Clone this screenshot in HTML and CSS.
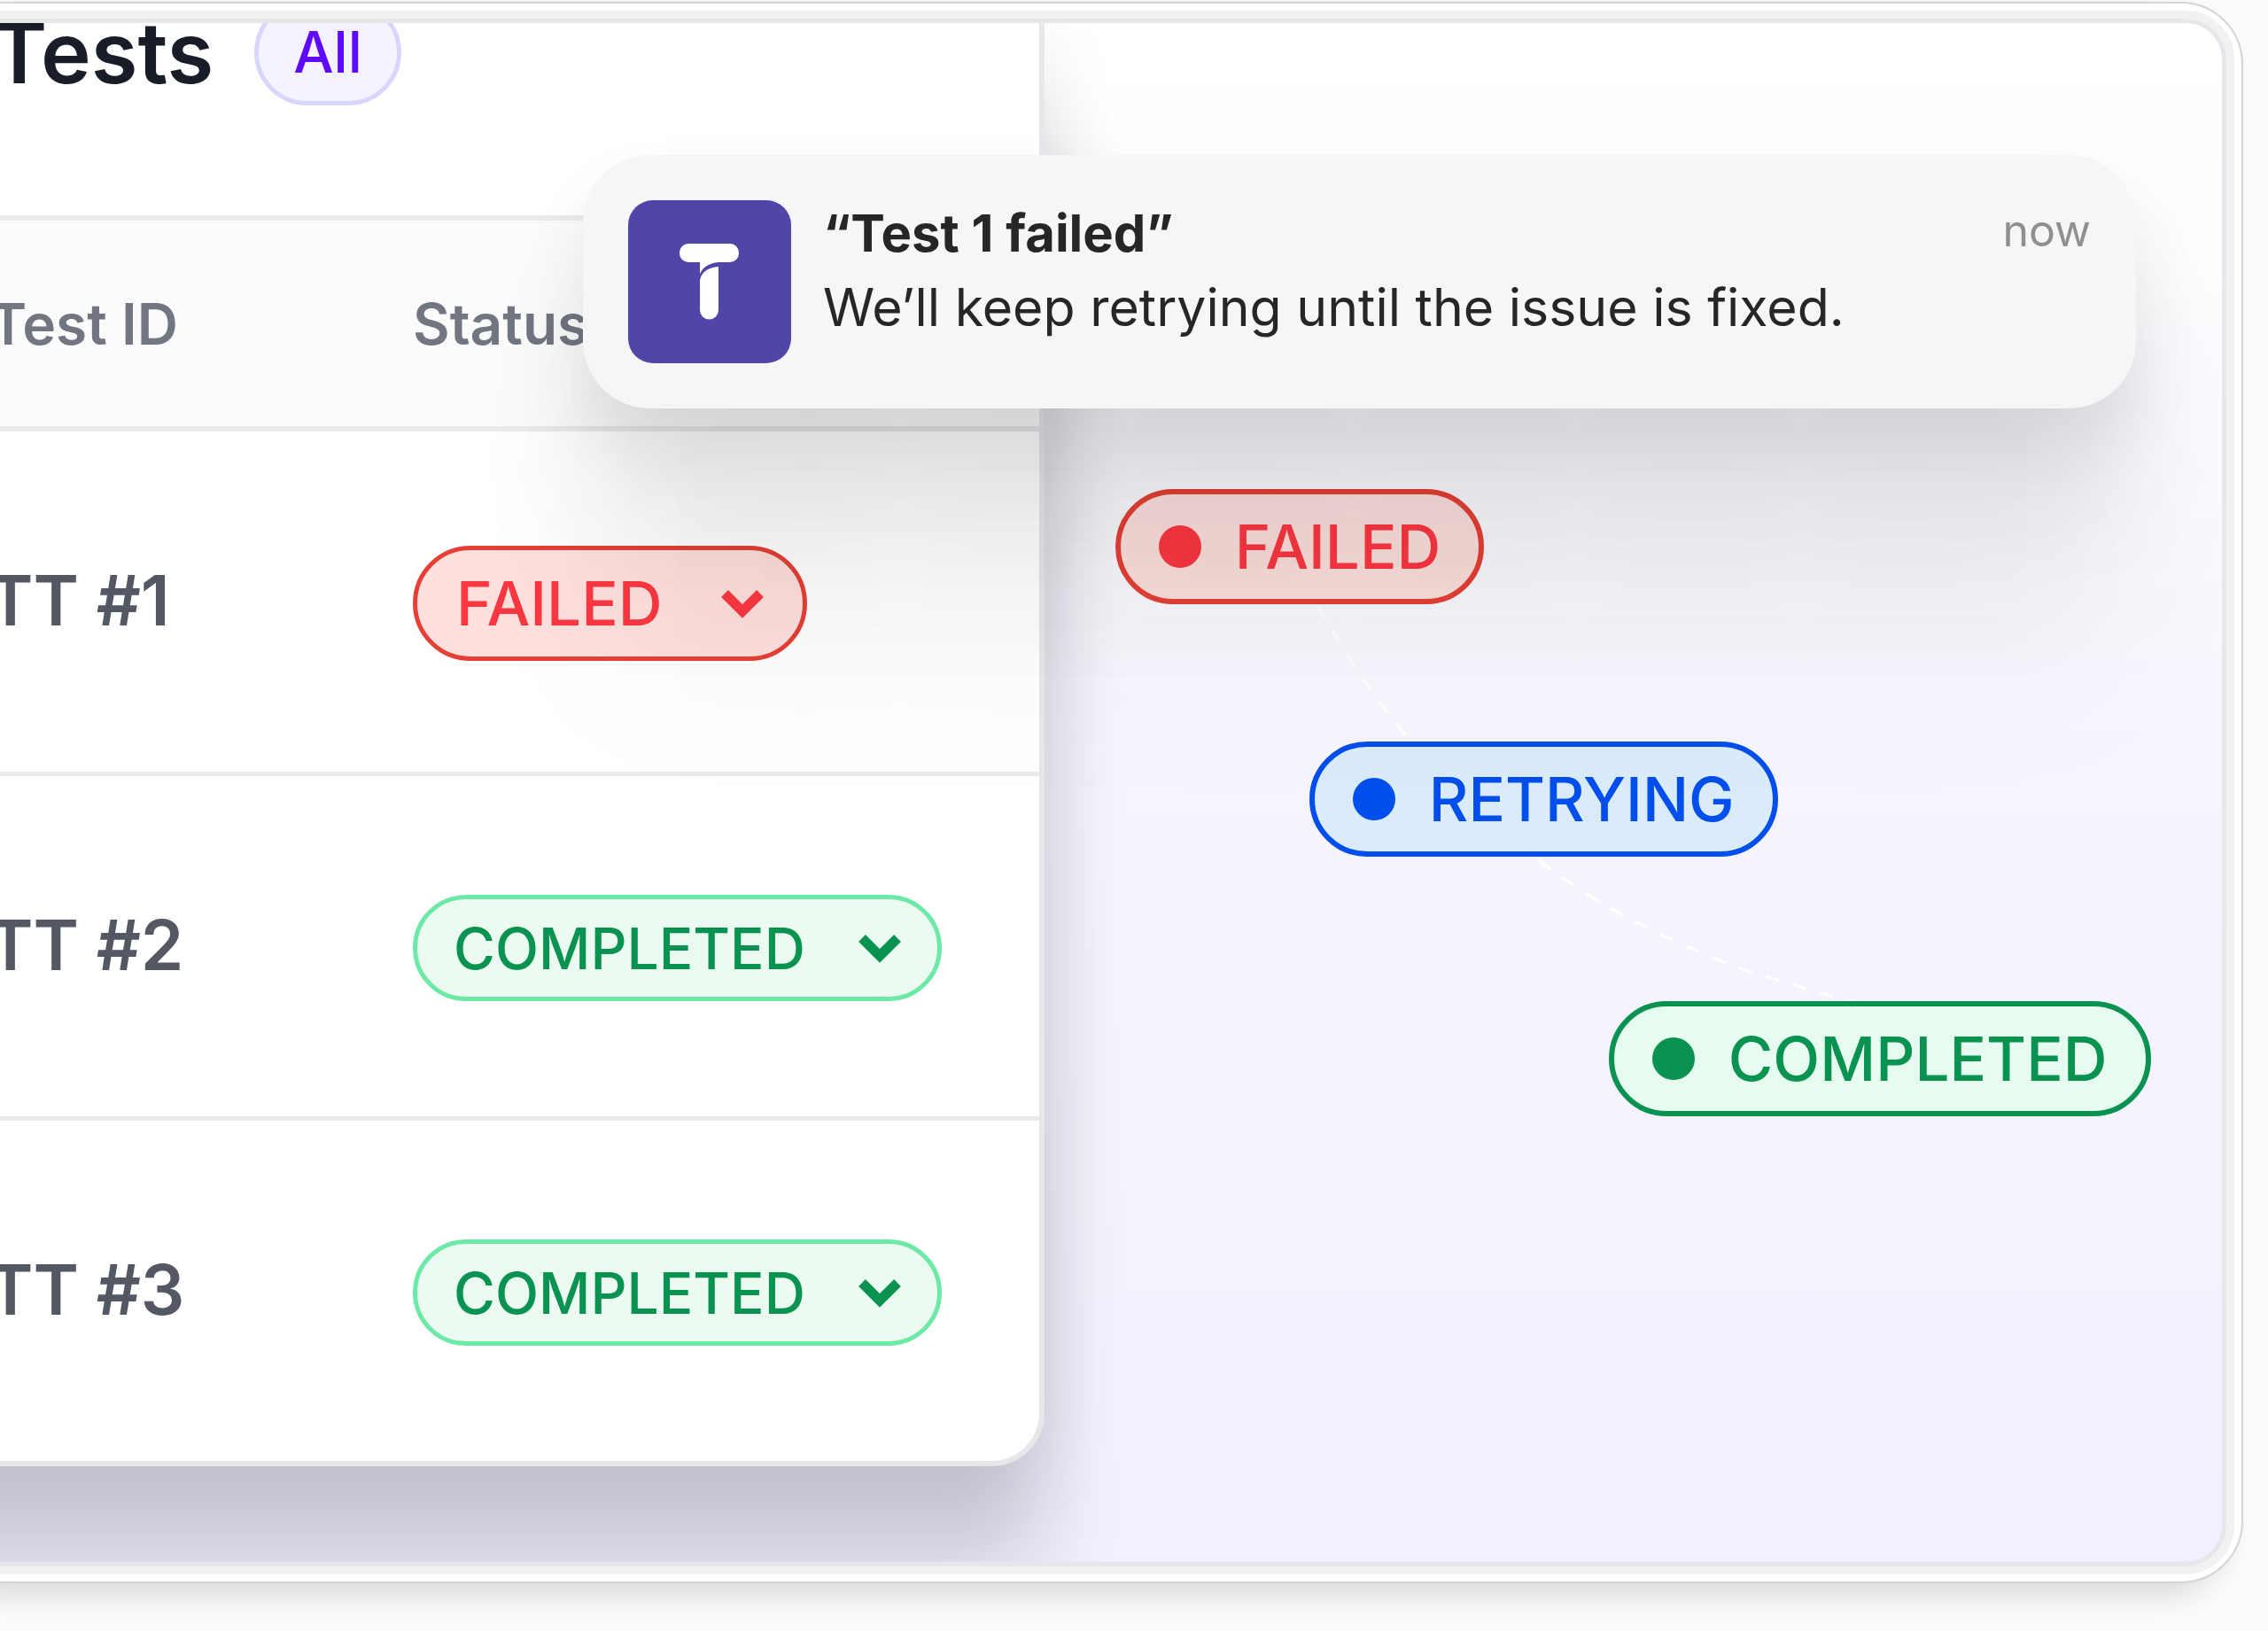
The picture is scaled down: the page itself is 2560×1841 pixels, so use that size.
FILE: index.html
```html
<!DOCTYPE html>
<html lang="en">
<head>
<meta charset="utf-8">
<title>Tests</title>
<link rel="stylesheet" href="styles.css">
</head>
<body>
<main class="frame">
  <div class="canvas">
    <section class="panel">
      <header class="panel-head">
        <h1 class="panel-title">Tests</h1>
        <button class="filter" type="button">All</button>
      </header>
      <table class="tests">
        <thead>
          <tr><th class="col-id" scope="col">Test ID</th><th scope="col">Status</th></tr>
        </thead>
        <tbody>
          <tr>
            <td class="col-id">TT #1</td>
            <td><button class="status status-failed" type="button">FAILED
              <svg class="chevron" viewBox="0 0 48 36" aria-hidden="true"><path d="M4 7 24 27 44 7"/></svg></button></td>
          </tr>
          <tr>
            <td class="col-id">TT #2</td>
            <td><button class="status status-completed" type="button">COMPLETED
              <svg class="chevron" viewBox="0 0 48 36" aria-hidden="true"><path d="M4 7 24 27 44 7"/></svg></button></td>
          </tr>
          <tr>
            <td class="col-id">TT #3</td>
            <td><button class="status status-completed" type="button">COMPLETED
              <svg class="chevron" viewBox="0 0 48 36" aria-hidden="true"><path d="M4 7 24 27 44 7"/></svg></button></td>
          </tr>
        </tbody>
      </table>
    </section>

    <section class="flow" aria-label="Status flow">
      <svg class="links" width="900" height="620" aria-hidden="true"><path d="M229 132C256 182 290 232 327 277C372 333 424 380 484 424C530 458 578 486 630 509C670 529 712 544 754 556C790 568 826 577 860 584"/></svg>
      <span class="node node-failed">FAILED</span>
      <span class="node node-retrying">RETRYING</span>
      <span class="node node-completed">COMPLETED</span>
    </section>

    <aside class="toast" role="status">
      <svg class="logo" viewBox="0 0 184 184" aria-hidden="true">
        <rect width="184" height="184" rx="28" fill="#4f46a8"/>
        <path fill="#fff" d="M68 49h47a10 10 0 0 1 10 10v1a10 10 0 0 1-10 10h-13c-11 1-18 6-21 13V70H68a10 10 0 0 1-10-10v-1a10 10 0 0 1 10-10Z"/>
        <path fill="#fff" d="M102 75v49a10 10 0 0 1-21 0V90c2-9 9-14 21-15Z"/>
      </svg>
      <div class="toast-text">
        <strong class="toast-title">“Test 1 failed”</strong>
        <p class="toast-body">We’ll keep retrying until the issue is fixed.</p>
      </div>
      <time class="toast-time">now</time>
    </aside>
  </div>
</main>
</body>
</html>
```
FILE: styles.css
```css
* { box-sizing: border-box; }

body {
  margin: 0;
  min-height: 100vh;
  padding: 2px 28px 54px 0;
  display: flex;
  overflow: hidden;
  background: #fcfcfc;
  font-family: Inter, "Liberation Sans", sans-serif;
}

button { font-family: inherit; cursor: pointer; }

.frame {
  flex: 1;
  display: flex;
  border: 2px solid #d4d4d4;
  border-left: 0;
  border-radius: 0 70px 70px 0;
  padding: 8px 8px 8px 0;
  background: #fff;
  box-shadow: -20px 14px 36px rgba(0, 0, 0, .15);
}

.canvas {
  position: relative;
  flex: 1;
  display: flex;
  overflow: hidden;
  border: 5px solid #e5e7eb;
  border-left: 0;
  border-radius: 0 46px 46px 0;
  outline: 9px solid #f1f1f1;
  margin: 9px 9px 9px 0;
  background: linear-gradient(#fff 0, #fdfdff 14%, #f6f5fe 50%, #f2f0fd 100%);
}

/* The panel runs on past the left edge of the canvas. */
.panel {
  width: calc(47% + 160px);
  margin-left: -160px;
  padding-left: 160px;
  align-self: flex-start;
  border: 6px solid #e5e7eb;
  border-width: 0 6px 6px 0;
  border-radius: 0 0 60px 0;
  background: #fff;
  box-shadow: 0 120px 96px rgba(16, 14, 24, .16), 0 20px 90px rgba(16, 14, 24, .08);
}

.panel-head {
  display: flex;
  align-items: center;
  gap: 46px;
  height: 217px;
  padding-bottom: 152px;
}

.panel-title {
  margin: 0 0 0 -10px;
  font-size: 96px;
  line-height: 120px;
  font-weight: 600;
  color: #181d27;
}

.filter {
  height: 120px;
  padding: 0 39px;
  border: 5px solid #d9d6fe;
  border-radius: 60px;
  background: #f4f3ff;
  font-size: 64px;
  font-weight: 500;
  color: #6009ff;
}

.tests {
  width: 100%;
  border-spacing: 0;
  text-align: left;
}

th {
  height: 244px;
  padding: 0;
  border-top: 6px solid #e9eaeb;
  border-bottom: 6px solid #e9eaeb;
  background: #fbfbfb;
  font-size: 64px;
  font-weight: 600;
  color: #717680;
}

td {
  height: 389px;
  padding: 4px 0 0;
  border-bottom: 5px solid #e9eaeb;
  font-size: 78px;
  font-weight: 600;
  color: #535862;
}

tbody tr:last-child td { height: 384px; border-bottom: 0; }

.col-id { width: 466px; text-indent: -12px; }

td.col-id { padding: 0 0 4px; text-indent: -14px; }

.status {
  display: flex;
  align-items: center;
  width: fit-content;
  border: 5px solid;
  border-radius: 66px;
  font-weight: 500;
}

.status-failed {
  height: 130px;
  gap: 66px;
  padding: 0 44px;
  border-color: #e64036;
  background: #fee0df;
  font-size: 69px;
  color: #fb3842;
}

.status-completed {
  height: 120px;
  gap: 60px;
  padding: 0 41px;
  border-color: #6ce9a6;
  background: #ebfbf2;
  font-size: 64px;
  color: #099250;
}

.chevron {
  width: 48px;
  height: 36px;
  fill: none;
  stroke: currentColor;
  stroke-width: 11;
}

.flow { flex: 1; position: relative; }

.links {
  position: absolute;
  top: 526px;
  left: 80px;
  fill: none;
  stroke: #fff;
  stroke-width: 3;
  stroke-dasharray: 16 16;
}

.node {
  position: absolute;
  display: flex;
  align-items: center;
  gap: 38px;
  height: 130px;
  padding: 0 43px;
  border: 6px solid;
  border-radius: 65px;
  font-size: 69px;
  font-weight: 500;
}

.node::before {
  content: "";
  width: 48px;
  height: 48px;
  border-radius: 50%;
  background: currentColor;
}

.node-failed { top: 526px; left: 80px; border-color: #e64036; background: #fbdfdd; color: #fb3842; }
.node-retrying { top: 811px; left: 299px; border-color: #004eeb; background: #daecfb; color: #004eeb; }
.node-completed { top: 1104px; left: 637px; border-color: #099250; background: #e6fcf1; color: #099250; }

.toast {
  position: absolute;
  top: 149px;
  right: 97px;
  left: 658px;
  display: flex;
  align-items: flex-start;
  gap: 36px;
  padding: 51px;
  border-radius: 76px;
  background: #f6f6f6;
  box-shadow:
    0 40px 80px rgba(0, 0, 0, .07),
    0 110px 130px rgba(0, 0, 0, .06),
    0 200px 180px rgba(0, 0, 0, .04),
    0 320px 190px rgba(0, 0, 0, .03);
  color: #262626;
}

.logo { width: 184px; height: 184px; }

.toast-text { flex: 1; margin-top: -4px; }

.toast-title, .toast-body {
  display: block;
  margin: 0;
  font-size: 59px;
  line-height: 83px;
}

.toast-title { font-size: 58px; }

.toast-time {
  font-size: 50px;
  line-height: 68px;
  color: #8f8f8f;
}
```
